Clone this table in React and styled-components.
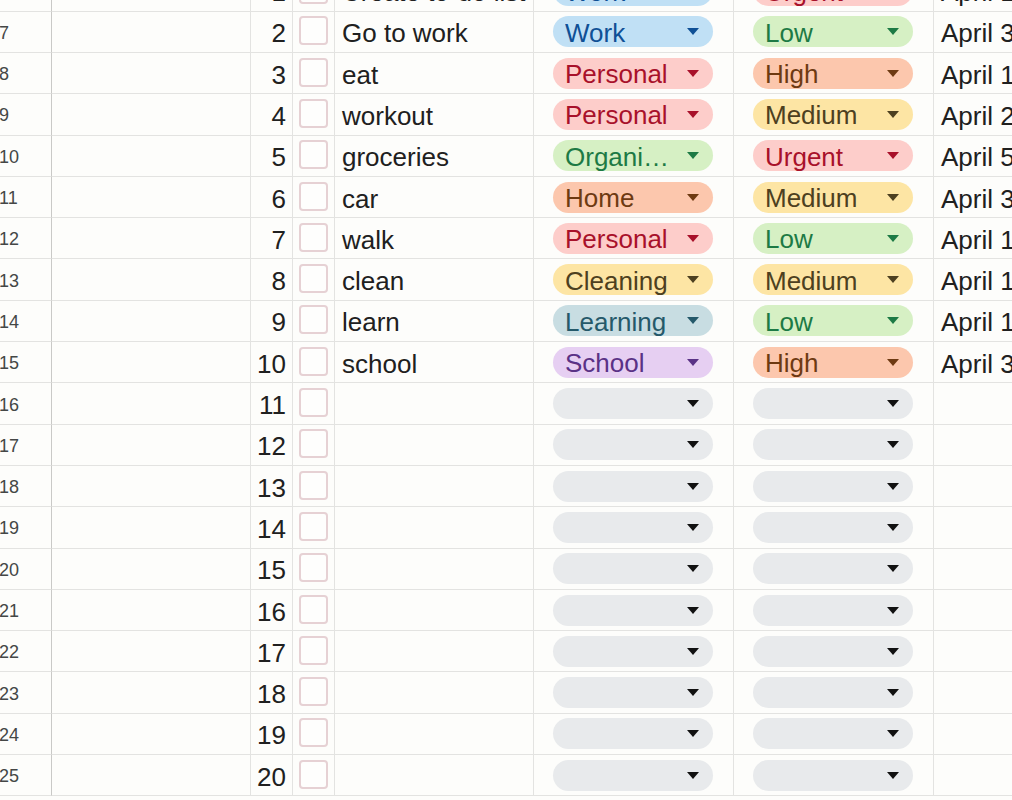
import React from "react";
import styled, { createGlobalStyle } from "styled-components";

const tones = {
  blue: { bg: "#c0e0f5", fg: "#0f5096" },
  red: { bg: "#fdcdca", fg: "#a8112a" },
  green: { bg: "#d6f0c4", fg: "#1d7a45" },
  orange: { bg: "#fcc7ad", fg: "#6e3a12" },
  yellow: { bg: "#fde5a4", fg: "#4d4020" },
  teal: { bg: "#c8dde2", fg: "#25596a" },
  purple: { bg: "#e6cff2", fg: "#5a3286" },
  gray: { bg: "#e8eaec", fg: "#111111" },
};

const categoryTone = {
  Work: "blue",
  Personal: "red",
  Organization: "green",
  Home: "orange",
  Cleaning: "yellow",
  Learning: "teal",
  School: "purple",
};

const priorityTone = {
  Low: "green",
  High: "orange",
  Medium: "yellow",
  Urgent: "red",
};

const tasks = [
  { task: "Create to-do list", category: "Work", priority: "Urgent", date: "April 1" },
  { task: "Go to work", category: "Work", priority: "Low", date: "April 3" },
  { task: "eat", category: "Personal", priority: "High", date: "April 1" },
  { task: "workout", category: "Personal", priority: "Medium", date: "April 2" },
  { task: "groceries", category: "Organization", priority: "Urgent", date: "April 5" },
  { task: "car", category: "Home", priority: "Medium", date: "April 3" },
  { task: "walk", category: "Personal", priority: "Low", date: "April 1" },
  { task: "clean", category: "Cleaning", priority: "Medium", date: "April 1" },
  { task: "learn", category: "Learning", priority: "Low", date: "April 1" },
  { task: "school", category: "School", priority: "High", date: "April 3" },
];

const rows = Array.from({ length: 20 }, (_, i) => tasks[i] || { task: "", category: "", priority: "", date: "" });

const App = () => {
  return (
    <>
      <GlobalStyle />
      <Sheet>
        {rows.map((row, i) => (
          <React.Fragment key={i}>
            <RowHead>{i + 6}</RowHead>
            <Cell />
            <Cell $align="right">{i + 1}</Cell>
            <CheckCell>
              <Checkbox />
            </CheckCell>
            <Cell>{row.task}</Cell>
            <ChipCell>
              <Chip $tone={categoryTone[row.category] || "gray"}>
                <ChipLabel>{row.category}</ChipLabel>
                <Caret />
              </Chip>
            </ChipCell>
            <ChipCell>
              <Chip $tone={priorityTone[row.priority] || "gray"}>
                <ChipLabel>{row.priority}</ChipLabel>
                <Caret />
              </Chip>
            </ChipCell>
            <Cell>{row.date}</Cell>
          </React.Fragment>
        ))}
      </Sheet>
    </>
  );
};

export default App;

const GlobalStyle = createGlobalStyle`
  html, body {
    margin: 0;
    padding: 0;
    background: #fdfdfb;
    overflow: hidden;
  }

  body {
    font-family: "Liberation Sans", Arial, sans-serif;
    color: #202020;
  }
`;

const lineColor = "#e3e3e1";

const Sheet = styled.div`
  display: grid;
  grid-template-columns: 52px 199px 42px 42px 199px 200px 200px 220px;
  grid-auto-rows: 41.3px;
  width: 1154px;
  margin-top: -29.6px;
`;

const Cell = styled.div`
  box-sizing: border-box;
  display: flex;
  align-items: center;
  justify-content: ${(props) => (props.$align === "right" ? "flex-end" : "flex-start")};
  padding: 3px 6px 0 7px;
  border-right: 1px solid ${lineColor};
  border-bottom: 1px solid ${lineColor};
  font-size: 26px;
  line-height: 30px;
  white-space: nowrap;
  overflow: hidden;
`;

const RowHead = styled(Cell)`
  padding: 2px 0 0 0;
  margin-left: -1px;
  font-size: 18px;
  color: #444746;
  border-right: 1px solid #c9c9c7;
`;

const CheckCell = styled(Cell)`
  justify-content: center;
  padding: 0 0 2px;
`;

const Checkbox = styled.div`
  box-sizing: border-box;
  width: 29px;
  height: 29px;
  border: 2px solid #e6d1d4;
  border-radius: 4px;
  background: #fefefd;
`;

const ChipCell = styled(Cell)`
  padding: 0 20px 0 19px;
`;

const Chip = styled.div`
  flex: 1;
  display: flex;
  align-items: center;
  gap: 14px;
  height: 31px;
  padding: 2px 14px 0 12px;
  box-sizing: border-box;
  border-radius: 16px;
  background: ${(props) => tones[props.$tone].bg};
  color: ${(props) => tones[props.$tone].fg};
  overflow: hidden;
`;

const ChipLabel = styled.span`
  flex: 1;
  min-width: 0;
  overflow: hidden;
  text-overflow: ellipsis;
  white-space: nowrap;
  font-size: 26px;
  line-height: 30px;
`;

const Caret = styled.span`
  flex: none;
  width: 0;
  height: 0;
  margin-bottom: 2px;
  border-left: 6px solid transparent;
  border-right: 6px solid transparent;
  border-top: 7px solid currentColor;
`;
